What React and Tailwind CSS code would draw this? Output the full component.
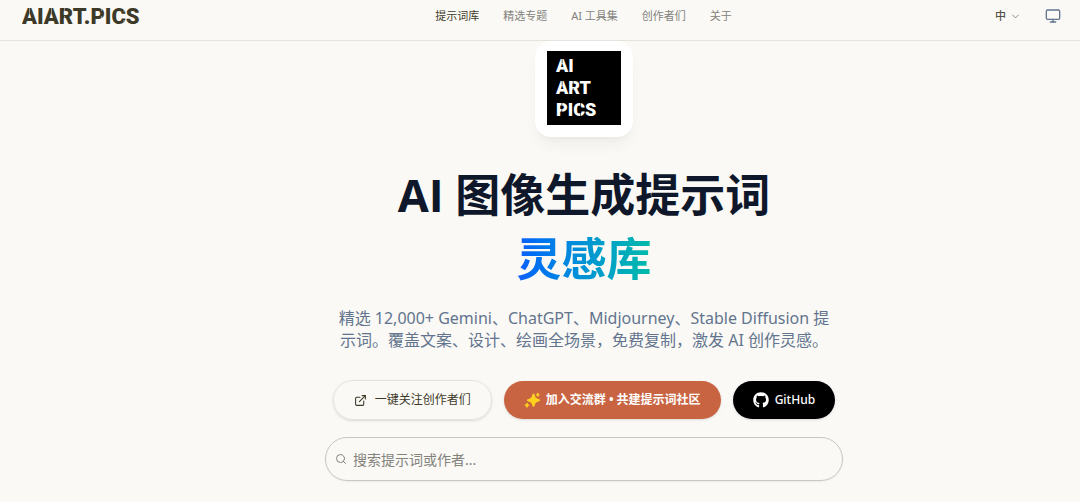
import React, { useState } from 'react';
import { ChevronDown, ExternalLink, Monitor, Search } from 'lucide-react';
import { FaGithub } from 'react-icons/fa';

const navItems = [
  { label: '提示词库', href: '#prompts', active: true },
  { label: '精选专题', href: '#topics' },
  { label: 'AI 工具集', href: '#tools' },
  { label: '创作者们', href: '#creators' },
  { label: '关于', href: '#about' }
];

const intro =
  '精选 12,000+ Gemini、ChatGPT、Midjourney、Stable Diffusion 提示词。覆盖文案、设计、绘画全场景\uff0c免费复制\uff0c激发 AI 创作灵感。';

// Wordmark with thin stencil cuts through the letters
const Wordmark = () => (
  <svg width="122" height="24" viewBox="0 0 122 24" className="font-[Roboto,sans-serif]" role="img" aria-label="AIART.PICS">
    <text x="0" y="20" fontSize="22" fontWeight="900" fill="#3d3929">AIART.PICS</text>
    <path
      d="M7.5 3v6M29.5 3v6M42.6 3v4M42.6 12v9M79.6 3v4M79.6 12v4M102 3v5M102 16v5"
      stroke="#faf9f5"
      strokeWidth="1"
      strokeOpacity=".5"
    />
  </svg>
);

const BrandTile = () => (
  <svg width="74" height="74" viewBox="0 0 74 74" className="bg-black font-[Roboto,sans-serif]" role="img" aria-label="AI ART PICS">
    <g fontSize="18" fontWeight="900" fill="#fff">
      <text x="9" y="21">AI</text>
      <text x="9" y="43">ART</text>
      <text x="9" y="65">PICS</text>
    </g>
    <path
      d="M15.2 7v5M15.2 29v5M26.2 29v4M26.2 37v7M14.8 51v4M14.8 58v3M33.5 51v4M33.5 62v4"
      stroke="#000"
      strokeWidth="1"
      strokeOpacity=".6"
    />
  </svg>
);

const Sparkles = () => (
  <svg className="h-4 w-4" viewBox="0 0 16 16" fill="#ffd21f" aria-hidden="true">
    <path d="M9.5 2.5 C10.4 6.4 11.2 7.2 15 8.2 C11.2 9.2 10.4 10 9.5 13.9 C8.6 10 7.8 9.2 4 8.2 C7.8 7.2 8.6 6.4 9.5 2.5Z" stroke="#ffd21f" strokeWidth="2" strokeLinejoin="round" />
    <path d="M13.8 .8 C14.1 2.1 14.4 2.4 15.6 2.8 C14.4 3.2 14.1 3.5 13.8 4.8 C13.5 3.5 13.2 3.2 12 2.8 C13.2 2.4 13.5 2.1 13.8 .8Z" stroke="#ffd21f" strokeWidth=".7" />
    <path d="M3 11 C3.5 12.5 3.8 12.8 5.2 13.2 C3.8 13.6 3.5 13.9 3 15.4 C2.5 13.9 2.2 13.6 .8 13.2 C2.2 12.8 2.5 12.5 3 11Z" stroke="#ffd21f" strokeWidth="1" />
  </svg>
);

const Header = () => (
  <header className="flex h-[41px] items-center border-b border-[#e4e3de] pb-2 pl-[22px] pr-[19px]">
    <a href="#home">
      <Wordmark />
    </a>
    <nav className="flex flex-1 justify-center gap-6 pl-7 text-[11px]">
      {navItems.map((item) => (
        <a key={item.label} href={item.href} className={item.active ? 'text-[#3d3929]' : 'text-[#83827d]'}>
          {item.label}
        </a>
      ))}
    </nav>
    <div className="flex items-center gap-6">
      <button type="button" className="flex items-center gap-1 text-[11px] font-medium text-[#535146]">
        中
        <ChevronDown size={11} className="text-[#83827d]" />
      </button>
      <button type="button" aria-label="Theme" className="text-[#62748e]">
        <Monitor size={16} />
      </button>
    </div>
  </header>
);

const App = () => {
  const [query, setQuery] = useState('');

  return (
    <div className="min-h-screen bg-[#faf9f5] font-['Noto_Sans','Noto_Sans_CJK_SC',sans-serif]">
      <Header />

      <main className="flex flex-col items-center pb-5 pl-22">
        {/* Brand tile */}
        <div className="rounded-2xl bg-white px-3 pt-[10px] pb-3 shadow-lg shadow-black/5">
          <BrandTile />
        </div>

        <h1 className="mt-[26px] text-center font-['Open_Sans','Noto_Sans_CJK_SC',sans-serif] text-[45px] leading-[64px] font-bold text-[#0f172b]">
          AI 图像生成提示词
          <span className="mx-auto block w-fit bg-linear-to-r from-[#155dfc] to-[#00bba7] bg-clip-text text-transparent">
            灵感库
          </span>
        </h1>

        <p className="mt-4 w-full max-w-[500px] text-center text-[16px] leading-[22px] text-[#62748e]">
          {intro}
        </p>

        {/* Actions */}
        <div className="mt-[29px] flex items-center gap-3 text-[12px]">
          <a
            href="#creators"
            className="flex h-10 items-center gap-2 rounded-full border border-[#e4e3de] px-5 text-[#3d3929] shadow-sm"
          >
            <ExternalLink size={13} />
            一键关注创作者们
          </a>
          <a
            href="#community"
            className="flex h-[38px] items-center gap-[6px] rounded-full bg-[#c96442] px-5 font-bold text-white shadow-sm"
          >
            <Sparkles />
            加入交流群 • 共建提示词社区
          </a>
          <a
            href="#github"
            className="flex h-[38px] items-center gap-[6px] rounded-full bg-black px-5 font-medium text-white shadow-sm"
          >
            <FaGithub size={16} />
            GitHub
          </a>
        </div>

        {/* Search */}
        <label className="mt-[17px] flex h-11 w-full max-w-[518px] items-center gap-[6px] rounded-full border border-[#c8c7c0] px-[9px] shadow-xs">
          <Search size={12} className="text-[#83827d]" />
          <input
            type="text"
            aria-label="搜索提示词或作者"
            placeholder="搜索提示词或作者..."
            value={query}
            onChange={(e) => setQuery(e.target.value)}
            className="flex-1 bg-transparent text-[14px] text-[#3d3929] outline-none placeholder:text-[#83827d]"
          />
        </label>
      </main>
    </div>
  );
};

export default App;
